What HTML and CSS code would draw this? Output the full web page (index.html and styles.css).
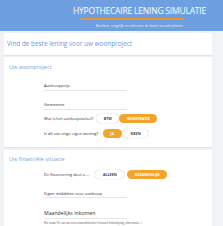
FILE: index.html
```html
<!DOCTYPE html>
<html>
<head>
<meta charset="utf-8">
<link rel="stylesheet" href="styles.css">
</head>
<body>
<header class="hero">
  <h1 class="hero-title">HYPOTHECAIRE LENING SIMULATIE</h1>
  <div class="hero-line"></div>
  <p class="hero-sub">Bereken, vergelijk en selecteer de beste woonkredieten</p>
</header>
<main class="content">
  <section class="card card-intro">
    <h2 class="intro-title">Vind de beste lening voor uw woonproject</h2>
  </section>
  <section class="card card-form card-home">
    <h3 class="section-title">Uw woonproject</h3>
    <div class="form">
      <div class="field"><span class="field-label">Aankoopprijs</span></div>
      <div class="field"><span class="field-label">Gemeente</span></div>
      <div class="choice choice-first">
        <span class="choice-label">Wat is het aankoopstelsel?</span>
        <span class="btn">BTW</span>
        <span class="btn btn-on">REGISTRATIE</span>
      </div>
      <div class="choice">
        <span class="choice-label">Is dit uw enige eigen woning?</span>
        <span class="btn btn-on">JA</span>
        <span class="btn">NEEN</span>
      </div>
    </div>
  </section>
  <section class="card card-form card-money">
    <h3 class="section-title">Uw financiële situatie</h3>
    <div class="form">
      <div class="choice choice-money">
        <span class="choice-label">De financiering doet u ...</span>
        <span class="btn">ALLEEN</span>
        <span class="btn btn-on">GEZAMENLIJK</span>
      </div>
      <div class="field field-own"><span class="field-label">Eigen middelen voor aankoop</span></div>
      <div class="field field-big"><span class="field-label">Maandelijks inkomen</span></div>
      <p class="hint">Het totaal (%) van uw netto-maandinkomen (inclusief kinderbijslag, alimentatie...)</p>
    </div>
  </section>
</main>
</body>
</html>
```
FILE: styles.css
```css
html, body {
  margin: 0;
  padding: 0;
}
body {
  background: #f1f3f6;
  font-family: "Open Sans", "DejaVu Sans", sans-serif;
  font-size: 4px;
  line-height: 5px;
  width: 223px;
  height: 226px;
  overflow: hidden;
}
.hero {
  background: #6d9fe1;
  height: 31px;
  padding-left: 56px;
  display: flex;
  flex-direction: column;
  align-items: center;
  box-sizing: border-box;
  padding-top: 6px;
}
.hero-title {
  margin: 0;
  color: #fff;
  font-weight: 400;
  font-size: 8.5px;
  line-height: 10px;
  letter-spacing: -0.2px;
  white-space: nowrap;
}
.hero-line {
  width: 102px;
  height: 2px;
  background: #e8922c;
  margin-top: 2px;
  margin-right: 16px;
}
.hero-sub {
  margin: 3px 0 0;
  color: #e6efff;
  font-size: 3.4px;
  line-height: 5px;
  white-space: nowrap;
}
.content {
  padding: 2px 11px 0 4px;
  display: flex;
  flex-direction: column;
  gap: 2px;
}
.card {
  background: #fff;
  box-shadow: 0 1px 1px rgba(0,0,0,0.06);
}
.card-intro {
  height: 22px;
  display: flex;
  align-items: center;
  padding-left: 3px;
}
.intro-title {
  margin: 0;
  font-weight: 400;
  font-size: 6.4px;
  line-height: 8px;
  color: #6a9bd8;
}
.card-form {
  padding-left: 5px;
}
.card-home {
  padding-top: 6px;
  padding-bottom: 9px;
}
.card-money {
  margin-top: 1px;
  padding-top: 5px;
  padding-bottom: 6px;
}
.section-title {
  margin: 0;
  font-weight: 400;
  font-size: 5.6px;
  line-height: 8px;
  color: #7aa3d8;
}
.form {
  padding-left: 35px;
  display: flex;
  flex-direction: column;
}
.field {
  width: 83px;
  border-bottom: 1px solid #e6e6e6;
  padding: 10px 0 2px;
  margin-top: 2px;
  line-height: 5px;
}
.field + .field {
  margin-top: 1px;
}
.field-label {
  font-size: 4.2px;
  color: #333;
}
.field-own {
  padding: 10px 0 1px;
}
.field.field-big {
  padding: 12px 0 1px;
  margin-top: 0;
  line-height: 6px;
}
.field-big .field-label {
  font-size: 5.2px;
}
.choice {
  display: flex;
  align-items: center;
  margin-top: 6px;
  height: 9px;
  gap: 1.5px;
}
.choice-first {
  margin-top: 4px;
  gap: 0;
}
.choice-money {
  margin-top: 7px;
  gap: 3px;
}
.choice-label {
  font-size: 4px;
  color: #333;
  margin-right: 3px;
}
.btn {
  height: 9px;
  padding: 0 7.5px;
  border-radius: 5px;
  font-size: 3.7px;
  font-weight: 700;
  display: flex;
  align-items: center;
  color: #444;
  background: #fff;
  box-shadow: 0 0 1px rgba(0,0,0,0.35);
}
.btn-on {
  background: #f4a42c;
  color: #fff;
  box-shadow: none;
}
.hint {
  margin: 2px 0 0;
  font-size: 2.6px;
  line-height: 4px;
  color: #555;
  white-space: nowrap;
}
```
